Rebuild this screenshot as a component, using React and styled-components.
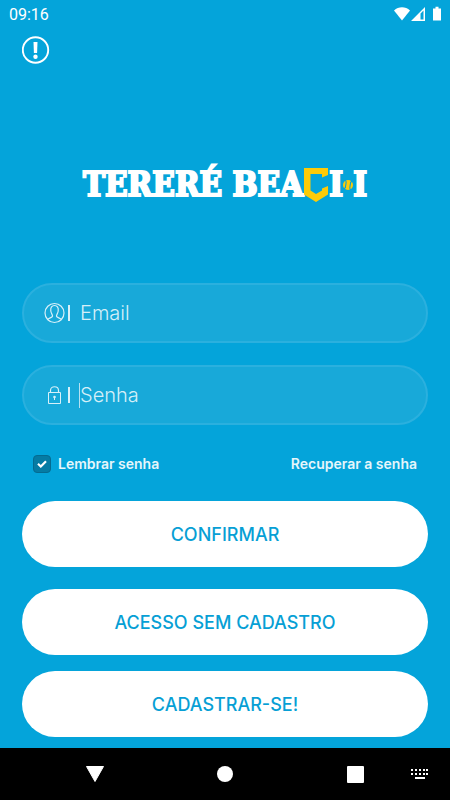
import React, { useState } from 'react';
import styled, { createGlobalStyle } from 'styled-components';

const GlobalStyle = createGlobalStyle`
  * {
    box-sizing: border-box;
  }

  body {
    margin: 0;
    background-color: #04a4da;
    font-family: Inter, 'Open Sans', sans-serif;
  }
`;

const Screen = styled.div`
  min-height: 100vh;
  display: flex;
  flex-direction: column;
  background-color: #04a4da;
  color: #ffffff;
`;

const StatusBar = styled.header`
  height: 28px;
  padding: 0 7px 0 9px;
  display: flex;
  align-items: center;
  justify-content: space-between;
  font-family: Roboto, sans-serif;
  font-size: 16px;

  svg {
    display: block;
  }
`;

const Content = styled.main`
  flex: 1;
  display: flex;
  flex-direction: column;
  padding: 8px 22px 10px;
`;

const InfoButton = styled.button`
  align-self: flex-start;
  width: 28px;
  height: 28px;
  padding: 0;
  border: none;
  background: none;
  color: inherit;
  cursor: pointer;

  svg {
    display: block;
  }
`;

const Logo = styled.h1`
  height: 44px;
  margin: 99px 0 76px;
  display: flex;
  align-items: center;
  justify-content: center;
  font-family: 'DejaVu Serif Condensed', 'DejaVu Serif', serif;
  font-stretch: condensed;
  font-size: 33px;
  line-height: 44px;
  font-weight: bold;
  white-space: pre;
  -webkit-text-stroke: 2px #ffffff;
`;

const Form = styled.form`
  display: flex;
  flex-direction: column;
`;

const FieldBox = styled.label`
  height: 60px;
  margin-bottom: 22px;
  padding: 0 22px 0 20px;
  display: flex;
  align-items: center;
  border: 2px solid #2bb0de;
  border-radius: 30px;
  background-color: #18a9d9;

  svg {
    flex: none;
  }
`;

const Divider = styled.span`
  width: 2px;
  height: 16px;
  margin: 0 9px 0 3px;
  background-color: #d8f0f9;
`;

const Caret = styled.span`
  width: 1px;
  height: 25px;
  background-color: ${(props) => (props.$active ? '#b5e1f2' : 'transparent')};
`;

const Input = styled.input`
  flex: 1;
  min-width: 0;
  padding: 0;
  border: none;
  outline: none;
  background: none;
  color: #ffffff;
  font-family: inherit;
  font-size: 20px;
  font-weight: 300;

  &::placeholder {
    color: #d5eff8;
    opacity: 1;
  }
`;

const Options = styled.div`
  height: 20px;
  margin: 7px 0 27px;
  padding: 0 11px;
  display: flex;
  align-items: center;
  justify-content: space-between;
  font-size: 14px;
  line-height: 18px;
  font-weight: 600;
  color: #e6f6fb;
`;

const Remember = styled.label`
  display: flex;
  align-items: center;
  gap: 7px;
`;

const CheckWrap = styled.span`
  display: grid;
  width: 18px;
  height: 18px;

  > * {
    grid-area: 1 / 1;
    place-self: center;
    pointer-events: none;
  }
`;

const Checkbox = styled.input`
  appearance: none;
  width: 18px;
  height: 18px;
  margin: 0;
  border: 1px solid #046b91;
  border-radius: 4px;
  background-color: #057ba4;
  pointer-events: auto !important;
`;

const Recover = styled.a`
  color: inherit;
  text-decoration: none;
`;

const Buttons = styled.div`
  display: flex;
  flex-direction: column;
  gap: 16px;
`;

const Button = styled.button`
  height: 66px;
  margin-bottom: ${(props) => (props.$main ? '6px' : '0')};
  border: none;
  border-radius: 33px;
  background-color: #ffffff;
  color: #079fd5;
  font-family: inherit;
  font-size: 18px;
  font-weight: 500;
  cursor: pointer;
`;

const NavBar = styled.nav`
  height: 52px;
  display: grid;
  grid-template-columns: 13fr 60px 14fr 60px 14fr 60px 13fr;
  align-items: center;
  justify-items: center;
  background-color: #000000;
`;

const NavButton = styled.button`
  grid-column: ${(props) => props.$column};
  justify-self: ${(props) => (props.$end ? 'end' : 'center')};
  padding: ${(props) => (props.$end ? '0 21px' : '0')};
  border: none;
  background: none;
  color: #ffffff;
  cursor: pointer;

  svg {
    display: block;
  }
`;

function StatusIcons() {
  return (
    <svg width="50" height="16" viewBox="0 0 50 16" aria-hidden="true">
      <g fill="#ffffff">
        <path d="M1 4.600C5.500.2 12.500.2 17 4.600L9 14.500Z" />
        <path fillRule="evenodd" d="M32 1V15H18ZM27.500 7.500V13.500h3V4.500Z" />
        <path d="M42.500.8h3V2.500H48V14.500h-8V2.500h2.500Z" />
      </g>
    </svg>
  );
}

function InfoIcon() {
  return (
    <svg width="28" height="28" viewBox="0 0 28 28" aria-hidden="true">
      <circle cx="13.500" cy="14" r="12.700" fill="none" stroke="#ffffff" strokeWidth="1.900" />
      <path d="M11.500 6h4l-.4 11h-3.200Z" fill="#ffffff" />
      <circle cx="13.500" cy="20.800" r="2.200" fill="#ffffff" />
    </svg>
  );
}

function ShieldIcon() {
  return (
    <svg width="26" height="36" viewBox="0 0 26 36" aria-hidden="true">
      <path
        d="M1 1H25V8L19 10.500V7H7.500V23.500L13 27L19 23.500V21.500L25 19V27.500L13 35L1 27.500Z"
        fill="#fdcb08"
      />
    </svg>
  );
}

function BallIcon() {
  return (
    <svg width="10" height="12" viewBox="0 0 10 12" aria-hidden="true">
      <circle cx="5" cy="6" r="5" fill="#fdcb08" />
      <path
        d="M2.500 1C4.500 4 2 6 2.500 8.500L1 10M9 2L7.500 3.500C8 6 5.500 8 7.500 11"
        fill="none"
        stroke="#04a4da"
        strokeWidth="1.100"
      />
    </svg>
  );
}

function UserIcon() {
  return (
    <svg width="21" height="22" viewBox="0 0 21 22" fill="none" stroke="#d8f0f9" aria-hidden="true">
      <circle cx="10.500" cy="11" r="9.500" strokeWidth="1.200" />
      <path
        d="M3.500 17.500C5 15.800 8 15.800 8.500 14.300C8.800 12.800 7.200 11.800 6.800 9C6.300 5.500 8 3.500 10.500 3.500S14.700 5.500 14.200 9C13.800 11.800 12.200 12.800 12.500 14.300C13 15.800 16 15.800 17.500 17.500"
        strokeWidth="1.200"
      />
    </svg>
  );
}

function LockIcon() {
  return (
    <svg width="21" height="22" viewBox="0 0 21 22" fill="none" stroke="#d8f0f9" aria-hidden="true">
      <path d="M4.500 8.500H16.500V19.500H4.500Z" />
      <path d="M6.500 8.500V6.500C6.500 1.500 14.500 1.500 14.500 6.500V8.500" strokeWidth="1.200" />
      <circle cx="10.500" cy="13" r="1.300" fill="#d8f0f9" stroke="none" />
      <path d="M10.500 13.500V16" />
    </svg>
  );
}

function App() {
  const [email, setEmail] = useState('');
  const [password, setPassword] = useState('');
  const [remember, setRemember] = useState(true);

  return (
    <Screen>
      <GlobalStyle />
      <StatusBar>
        <span>09:16</span>
        <StatusIcons />
      </StatusBar>

      <Content>
        <InfoButton type="button" aria-label="Informações">
          <InfoIcon />
        </InfoButton>

        <Logo aria-label="Tereré Beach">
          <span>TERERÉ BEA</span>
          <ShieldIcon />
          <span>I</span>
          <BallIcon />
          <span>I</span>
        </Logo>

        <Form onSubmit={(e) => e.preventDefault()}>
          <FieldBox>
            <UserIcon />
            <Divider />
            <Caret />
            <Input
              type="email"
              aria-label="Email"
              placeholder="Email"
              value={email}
              onChange={(e) => setEmail(e.target.value)}
            />
          </FieldBox>
          <FieldBox>
            <LockIcon />
            <Divider />
            <Caret $active={password === ''} />
            <Input
              type="password"
              aria-label="Senha"
              placeholder="Senha"
              value={password}
              onChange={(e) => setPassword(e.target.value)}
            />
          </FieldBox>

          <Options>
            <Remember>
              <CheckWrap>
                <Checkbox
                  type="checkbox"
                  checked={remember}
                  onChange={(e) => setRemember(e.target.checked)}
                />
                {remember && (
                  <svg width="10" height="8" viewBox="0 0 10 8" fill="none" aria-hidden="true">
                    <path d="M1 3.800L3.800 6.500L9 1.300" stroke="#ffffff" strokeWidth="2.200" />
                  </svg>
                )}
              </CheckWrap>
              Lembrar senha
            </Remember>
            <Recover href="#recuperar">Recuperar a senha</Recover>
          </Options>

          <Buttons>
            <Button type="submit" $main>CONFIRMAR</Button>
            <Button type="button">ACESSO SEM CADASTRO</Button>
            <Button type="button">CADASTRAR-SE!</Button>
          </Buttons>
        </Form>
      </Content>

      <NavBar>
        <NavButton type="button" aria-label="Voltar" $column={2}>
          <svg width="18" height="16" viewBox="0 0 18 16">
            <path d="M.5.5H17.500L9 15.500Z" fill="#ffffff" stroke="#ffffff" strokeLinejoin="round" />
          </svg>
        </NavButton>
        <NavButton type="button" aria-label="Início" $column={4}>
          <svg width="16" height="16" viewBox="0 0 16 16">
            <circle cx="8" cy="8" r="8" fill="#ffffff" />
          </svg>
        </NavButton>
        <NavButton type="button" aria-label="Recentes" $column={6}>
          <svg width="17" height="17" viewBox="0 0 17 17">
            <rect width="17" height="17" rx="1" fill="#ffffff" />
          </svg>
        </NavButton>
        <NavButton type="button" aria-label="Teclado" $column={7} $end>
          <svg width="18" height="10" viewBox="0 0 18 10" fill="#ffffff">
            {[0, 4, 8, 12, 15].map((x) => (
              <path key={x} d={`M${x} 0h2v2h-2ZM${x} 4h2v2h-2Z`} />
            ))}
            <path d="M4 8h10v2H4Z" />
          </svg>
        </NavButton>
      </NavBar>
    </Screen>
  );
}

export default App;
